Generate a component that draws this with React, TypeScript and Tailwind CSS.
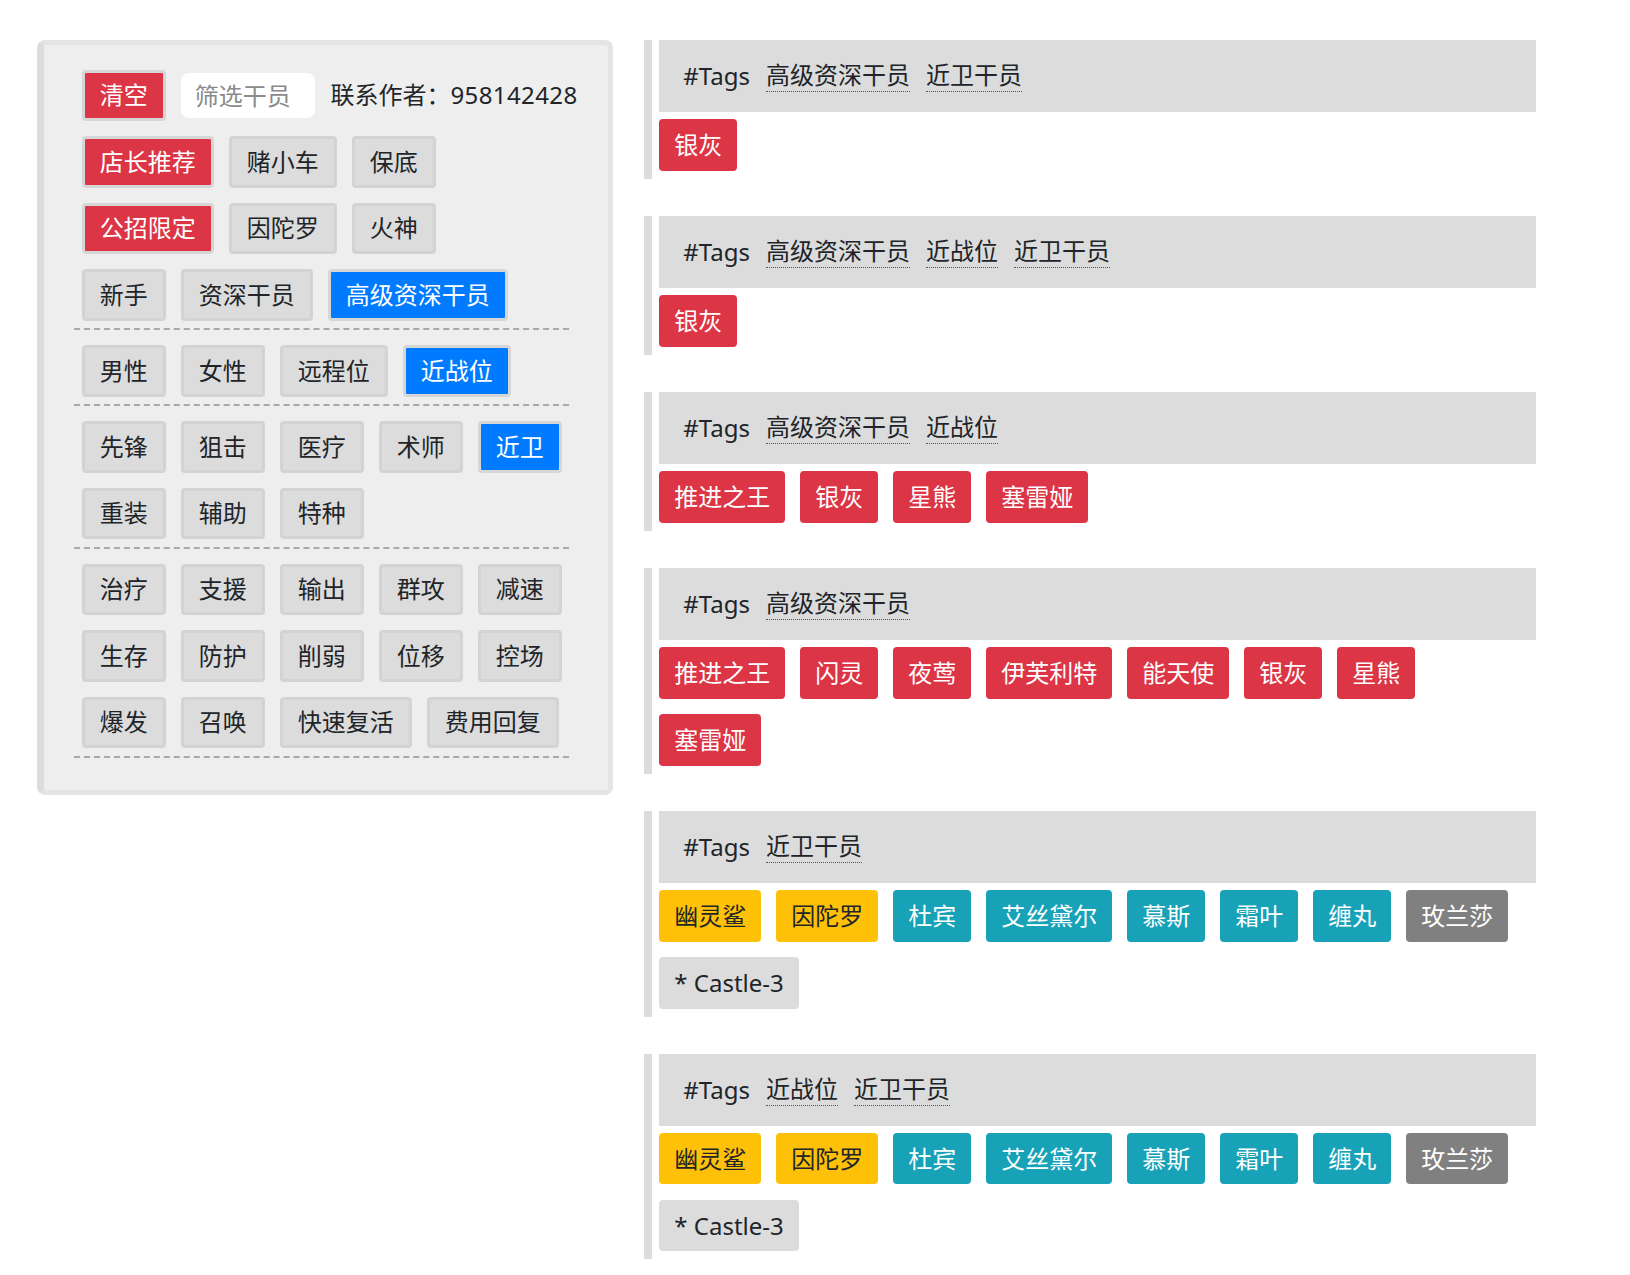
import React from "react";

type V = "red" | "blue" | "gray";

function Btn({ children, v = "gray" }: { children: React.ReactNode; v?: V }) {
  const color =
    v === "red"
      ? "bg-[#dc3545] border-[#d6d6d6] text-white"
      : v === "blue"
      ? "bg-[#007bff] border-[#d6d6d6] text-white"
      : "bg-[#dcdcdc] border-[#d3d3d3] text-[#212529]";
  return (
    <div
      className={
        "h-[51.5px] m-[7.5px] px-[15px] border-[3px] rounded-[4px] flex items-center text-[24px] leading-none whitespace-nowrap " +
        color
      }
    >
      {children}
    </div>
  );
}

function Row({ children }: { children: React.ReactNode }) {
  return <div className="flex items-center">{children}</div>;
}

function Group({ children }: { children: React.ReactNode }) {
  return (
    <div className="w-[495px] border-b-2 border-dashed border-[#a9a9a9] mb-[7.5px]">
      {children}
    </div>
  );
}

type TC = "red" | "yellow" | "teal" | "gray" | "light";

function Tag({ children, c }: { children: React.ReactNode; c: TC }) {
  const color =
    c === "red"
      ? "bg-[#dc3545] text-white"
      : c === "yellow"
      ? "bg-[#ffc107] text-[#212529]"
      : c === "teal"
      ? "bg-[#17a2b8] text-white"
      : c === "gray"
      ? "bg-[#808080] text-white"
      : "bg-[#dcdcdc] text-[#212529]";
  return (
    <div
      className={
        "h-[51.7px] px-[15px] mr-[15px] rounded-[4px] flex items-center text-[24px] leading-none whitespace-nowrap " +
        color
      }
    >
      {children}
    </div>
  );
}

type Block = { tags: string[]; ops: [string, TC][] };

const guard: [string, TC][] = [
  ["幽灵鲨", "yellow"],
  ["因陀罗", "yellow"],
  ["杜宾", "teal"],
  ["艾丝黛尔", "teal"],
  ["慕斯", "teal"],
  ["霜叶", "teal"],
  ["缠丸", "teal"],
  ["玫兰莎", "gray"],
  ["* Castle-3", "light"],
];

const blocks: Block[] = [
  { tags: ["高级资深干员", "近卫干员"], ops: [["银灰", "red"]] },
  { tags: ["高级资深干员", "近战位", "近卫干员"], ops: [["银灰", "red"]] },
  {
    tags: ["高级资深干员", "近战位"],
    ops: [
      ["推进之王", "red"],
      ["银灰", "red"],
      ["星熊", "red"],
      ["塞雷娅", "red"],
    ],
  },
  {
    tags: ["高级资深干员"],
    ops: [
      ["推进之王", "red"],
      ["闪灵", "red"],
      ["夜莺", "red"],
      ["伊芙利特", "red"],
      ["能天使", "red"],
      ["银灰", "red"],
      ["星熊", "red"],
      ["塞雷娅", "red"],
    ],
  },
  { tags: ["近卫干员"], ops: guard },
  { tags: ["近战位", "近卫干员"], ops: guard },
];

export default function App() {
  return (
    <div className="min-h-screen bg-white flex items-start pt-[40px] pl-[37.3px] gap-[30.5px] text-[#212529] font-['Noto_Sans','Noto_Sans_CJK_SC',sans-serif]">
      {/* left panel */}
      <div className="w-[576px] shrink-0 bg-[#eeeeee] rounded-[8px] border-[5px] border-[#e4e4e4] border-l-[7.7px] border-l-[#dcdcdc] pt-[17px] pb-[25px] pl-[30px]">
        <Group>
          <Row>
            <Btn v="red">清空</Btn>
            <input
              placeholder="筛选干员"
              className="m-[7.5px] w-[134.6px] h-[45px] rounded-[8px] bg-white px-[14px] text-[24px] outline-none placeholder:text-[#8a8a8a] text-[#212529]"
            />
            <span className="m-[7.5px] text-[24px] whitespace-nowrap">
              联系作者：<span className="tracking-[0.4px]">958142428</span>
            </span>
          </Row>
          <Row>
            <Btn v="red">店长推荐</Btn>
            <Btn>赌小车</Btn>
            <Btn>保底</Btn>
          </Row>
          <Row>
            <Btn v="red">公招限定</Btn>
            <Btn>因陀罗</Btn>
            <Btn>火神</Btn>
          </Row>
          <Row>
            <Btn>新手</Btn>
            <Btn>资深干员</Btn>
            <Btn v="blue">高级资深干员</Btn>
          </Row>
        </Group>
        <Group>
          <Row>
            <Btn>男性</Btn>
            <Btn>女性</Btn>
            <Btn>远程位</Btn>
            <Btn v="blue">近战位</Btn>
          </Row>
        </Group>
        <Group>
          <Row>
            <Btn>先锋</Btn>
            <Btn>狙击</Btn>
            <Btn>医疗</Btn>
            <Btn>术师</Btn>
            <Btn v="blue">近卫</Btn>
          </Row>
          <Row>
            <Btn>重装</Btn>
            <Btn>辅助</Btn>
            <Btn>特种</Btn>
          </Row>
        </Group>
        <Group>
          <Row>
            <Btn>治疗</Btn>
            <Btn>支援</Btn>
            <Btn>输出</Btn>
            <Btn>群攻</Btn>
            <Btn>减速</Btn>
          </Row>
          <Row>
            <Btn>生存</Btn>
            <Btn>防护</Btn>
            <Btn>削弱</Btn>
            <Btn>位移</Btn>
            <Btn>控场</Btn>
          </Row>
          <Row>
            <Btn>爆发</Btn>
            <Btn>召唤</Btn>
            <Btn>快速复活</Btn>
            <Btn>费用回复</Btn>
          </Row>
        </Group>
      </div>

      {/* results */}
      <div className="w-[892px] shrink-0 flex flex-col">
        {blocks.map((b, i) => (
          <div
            key={i}
            className="border-l-[8px] border-[#dcdcdc] pl-[7.5px] pb-[8px] mb-[37.3px]"
          >
            <div className="h-[71.7px] bg-[#dcdcdc] pl-[24px] flex items-center gap-[16px] text-[24px]">
              <span className="leading-[32px]">#Tags</span>
              {b.tags.map((t) => (
                <span
                  key={t}
                  className="leading-[32px] border-b border-dotted border-[#555]"
                >
                  {t}
                </span>
              ))}
            </div>
            <div className="mt-[7.3px] flex flex-wrap gap-y-[15.3px]">
              {b.ops.map(([n, c]) => (
                <Tag key={n} c={c}>
                  {n}
                </Tag>
              ))}
            </div>
          </div>
        ))}
      </div>
    </div>
  );
}
